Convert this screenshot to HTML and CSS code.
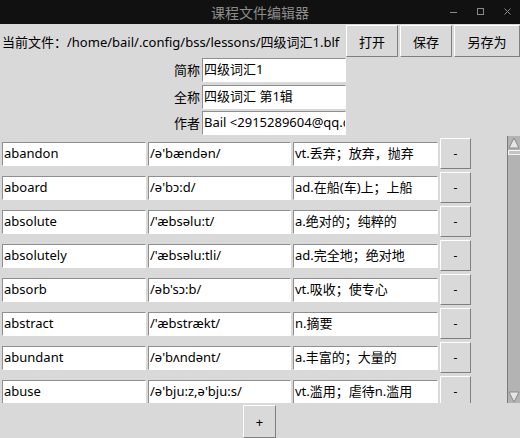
FILE: index.html
```
<!DOCTYPE html>
<html lang="zh">
<head>
<meta charset="utf-8">
<title>课程文件编辑器</title>
<link rel="stylesheet" href="styles.css">
</head>
<body>
<div class="titlebar">
  <span class="title">课程文件编辑器</span>
  <div class="wc">
    <svg class="wc-ic" width="8" height="8" viewBox="0 0 8 8"><line x1="0" y1="4.5" x2="7" y2="4.5" stroke="#8a8a8a" stroke-width="1"/></svg>
    <svg class="wc-ic" width="8" height="8" viewBox="0 0 8 8"><rect x="0.5" y="0.5" width="6" height="6" fill="none" stroke="#8a8a8a" stroke-width="1"/></svg>
    <svg class="wc-ic" width="8" height="8" viewBox="0 0 8 8"><path d="M0.5 0.5 L6.5 6.5 M6.5 0.5 L0.5 6.5" stroke="#8a8a8a" stroke-width="1"/></svg>
  </div>
</div>
<div class="app">
  <div class="toprow">
    <span class="curfile">当前文件：/home/bail/.config/bss/lessons/四级词汇1.blf</span>
    <button class="btn b1">打开</button>
    <button class="btn b1">保存</button>
    <button class="btn b2">另存为</button>
  </div>
  <div class="form">
    <span class="flabel">简称</span><div class="entry">四级词汇1</div>
    <span class="flabel">全称</span><div class="entry">四级词汇 第1辑</div>
    <span class="flabel">作者</span><div class="entry">Bail &lt;2915289604@qq.com&gt;</div>
  </div>
  <div class="listwrap">
    <div class="list">
      <div class="row"><div class="entry e1">abandon</div><div class="entry e2">/ə'bændən/</div><div class="entry e3">vt.丢弃；放弃，抛弃</div><button class="btn del">-</button></div>
      <div class="row"><div class="entry e1">aboard</div><div class="entry e2">/ə'bɔ:d/</div><div class="entry e3">ad.在船(车)上；上船</div><button class="btn del">-</button></div>
      <div class="row"><div class="entry e1">absolute</div><div class="entry e2">/'æbsəlu:t/</div><div class="entry e3">a.绝对的；纯粹的</div><button class="btn del">-</button></div>
      <div class="row"><div class="entry e1">absolutely</div><div class="entry e2">/'æbsəlu:tli/</div><div class="entry e3">ad.完全地；绝对地</div><button class="btn del">-</button></div>
      <div class="row"><div class="entry e1">absorb</div><div class="entry e2">/əb'sɔ:b/</div><div class="entry e3">vt.吸收；使专心</div><button class="btn del">-</button></div>
      <div class="row"><div class="entry e1">abstract</div><div class="entry e2">/'æbstrækt/</div><div class="entry e3">n.摘要</div><button class="btn del">-</button></div>
      <div class="row"><div class="entry e1">abundant</div><div class="entry e2">/ə'bʌndənt/</div><div class="entry e3">a.丰富的；大量的</div><button class="btn del">-</button></div>
      <div class="row"><div class="entry e1">abuse</div><div class="entry e2">/ə'bju:z,ə'bju:s/</div><div class="entry e3">vt.滥用；虐待n.滥用</div><button class="btn del">-</button></div>
    </div>
    <div class="scrollbar">
      <svg class="arrow up" width="13" height="12" viewBox="0 0 13 12"><polygon points="6,1 1,11 11,11" fill="#e6e6e6" stroke="#8a8a8a" stroke-width="1"/></svg>
      <div class="slider"></div>
      <div class="trough"></div>
      <svg class="arrow down" width="13" height="12" viewBox="0 0 13 12"><polygon points="1,1 11,1 6,11" fill="#e6e6e6" stroke="#8a8a8a" stroke-width="1"/></svg>
    </div>
  </div>
  <div class="bottom">
    <button class="btn add">+</button>
  </div>
</div>
</body>
</html>
```
FILE: styles.css
```
* { box-sizing: border-box; }
html, body { margin: 0; padding: 0; }
body {
  width: 520px;
  height: 438px;
  overflow: hidden;
  background: #d9d9d9;
  font-family: "Noto Sans", "Noto Sans CJK SC", sans-serif;
  font-size: 13px;
  color: #000;
}
.titlebar {
  height: 24px;
  background: #111111;
  position: relative;
  display: flex;
  align-items: center;
  justify-content: center;
}
.title {
  font-family: "Noto Sans CJK SC", sans-serif;
  font-size: 14px;
  color: #8c8c8c;
  line-height: 24px;
}
.wc {
  position: absolute;
  right: 8px;
  top: 8px;
  display: flex;
  gap: 19px;
}
.wc-ic { display: block; }
.app { display: flex; flex-direction: column; }
.toprow {
  display: flex;
  align-items: center;
  gap: 2px;
  height: 32px;
  margin-top: 1px;
}
.curfile {
  flex: 1;
  padding-left: 2px;
  white-space: nowrap;
  overflow: hidden;
}
.btn {
  font-family: "Noto Sans", "Noto Sans CJK SC", sans-serif;
  font-size: 13px;
  color: #000;
  background: #d9d9d9;
  border: 1px solid;
  border-color: #ffffff #7f7f7f #7f7f7f #ffffff;
  padding: 0;
  margin: 0;
  height: 32px;
  display: flex;
  align-items: center;
  justify-content: center;
}
.b1 { width: 52px; }
.b2 { width: 66px; }
.form {
  display: grid;
  grid-template-columns: 200px 144px;
  column-gap: 2px;
  row-gap: 2.5px;
  grid-auto-rows: 24px;
  margin-top: 1px;
}
.flabel {
  text-align: right;
  line-height: 24px;
  white-space: nowrap;
}
.entry {
  background: #fff;
  border: 1px solid;
  border-color: #8f8f8f #ffffff #ffffff #8f8f8f;
  height: 24px;
  line-height: 21px;
  padding-left: 1px;
  white-space: nowrap;
  overflow: hidden;
}
.listwrap {
  display: flex;
  height: 267px;
  margin-top: 1px;
  overflow: hidden;
}
.list {
  flex: 1;
  overflow: hidden;
}
.row {
  display: flex;
  align-items: flex-start;
  height: 34px;
  padding-left: 2px;
}
.row .entry { margin-top: 6px; margin-right: 2px; }
.e1 { width: 144px; }
.e2 { width: 143px; }
.e3 { width: 145px; }
.del {
  width: 31px;
  height: 31px;
  margin-top: 2px;
  font-size: 12px;
}
.scrollbar {
  width: 13px;
  background: #b3b3b3;
  border-left: 1px solid #7a7a7a;
  display: flex;
  flex-direction: column;
}
.arrow { display: block; flex: none; margin-top: 1px; }
.slider {
  height: 5px;
  margin-top: 1px;
  border: 1px solid #f4f4f4;
  border-right: none;
  background: #c4c4c4;
}
.trough { flex: 1; }
.arrow.down { margin-top: 0; margin-bottom: 0; }
.bottom {
  display: flex;
  justify-content: center;
  margin-top: 2px;
}
.add {
  width: 33px;
  height: 33px;
  margin-left: -1px;
}
```
